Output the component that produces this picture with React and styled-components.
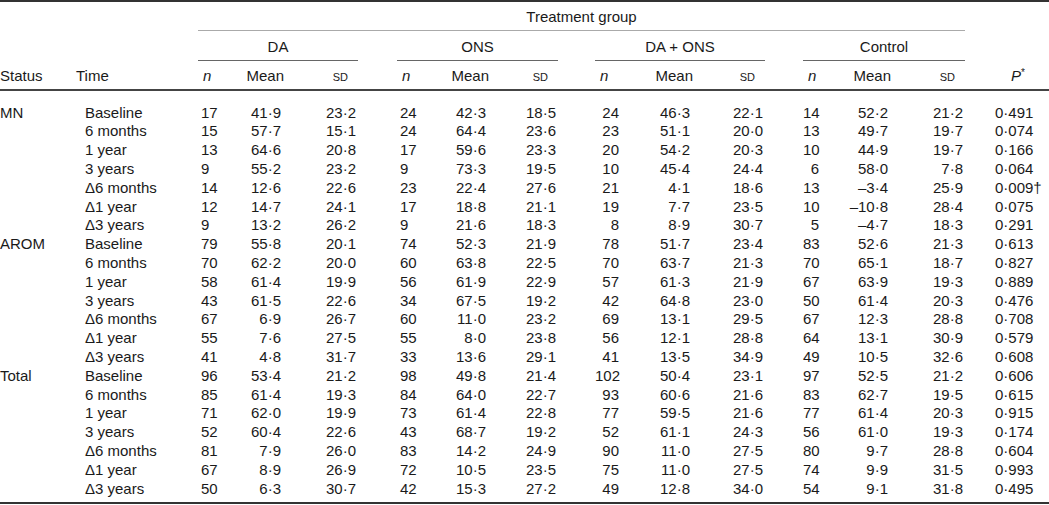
import React from 'react';
import styled, { createGlobalStyle } from 'styled-components';

const GlobalStyle = createGlobalStyle`
  html, body { margin: 0; padding: 0; background: #ffffff; }
  body { font-family: "Liberation Sans", Arial, sans-serif; color: #1a1a1a; }
`;

const COLS =
  '76px 122px 32px 55px 73px 39px 32px 61px 68px 37px 30px 69px 71px 38px 22px 67px 73px 84px';

const Table = styled.div`
  width: 1049px;
  border-top: 2px solid #333;
  border-bottom: 2px solid #333;
  font-size: 15px;
  white-space: nowrap;
`;

const Row = styled.div`
  display: grid;
  grid-template-columns: ${COLS};
  align-items: center;
  height: ${(p) => p.$h}px;
  box-sizing: border-box;
  border-bottom: ${(p) => (p.$rule ? '2px solid #444' : 'none')};
`;

const SpanLabel = styled.div`
  grid-column: ${(p) => p.$col};
  align-self: stretch;
  display: flex;
  align-items: center;
  justify-content: center;
  border-bottom: 1px solid ${(p) => p.$line};
  padding-top: ${(p) => p.$pt || 0}px;
`;

const Body = styled.div`
  padding: 12.6px 0 3.6px;
`;

const DataRow = styled.div`
  display: grid;
  grid-template-columns: ${COLS};
  height: 18.8px;
  line-height: 18.8px;
`;

const Cell = styled.div`
  text-align: ${(p) => p.$align || 'left'};
  padding-left: ${(p) => p.$pl || 0}px;
  padding-right: ${(p) => p.$pr || 0}px;
  overflow: visible;
`;

const Italic = styled.span`
  font-style: italic;
`;

const SmallCaps = styled.span`
  font-variant: small-caps;
`;

const Sup = styled.sup`
  font-size: 10px;
  vertical-align: 5px;
  line-height: 0;
`;

const groups = [
  { label: 'DA', col: '3 / 6', nAlign: 'left' },
  { label: 'ONS', col: '7 / 10', nAlign: 'left' },
  { label: 'DA + ONS', col: '11 / 14', nAlign: 'right' },
  { label: 'Control', col: '15 / 18', nAlign: 'right' },
];

const raw = [
  ['MN', [
    ['Baseline', '17 41·9 23·2', '24 42·3 18·5', '24 46·3 22·1', '14 52·2 21·2', '0·491'],
    ['6 months', '15 57·7 15·1', '24 64·4 23·6', '23 51·1 20·0', '13 49·7 19·7', '0·074'],
    ['1 year', '13 64·6 20·8', '17 59·6 23·3', '20 54·2 20·3', '10 44·9 19·7', '0·166'],
    ['3 years', '9 55·2 23·2', '9 73·3 19·5', '10 45·4 24·4', '6 58·0 7·8', '0·064'],
    ['Δ6 months', '14 12·6 22·6', '23 22·4 27·6', '21 4·1 18·6', '13 –3·4 25·9', '0·009†'],
    ['Δ1 year', '12 14·7 24·1', '17 18·8 21·1', '19 7·7 23·5', '10 –10·8 28·4', '0·075'],
    ['Δ3 years', '9 13·2 26·2', '9 21·6 18·3', '8 8·9 30·7', '5 –4·7 18·3', '0·291'],
  ]],
  ['AROM', [
    ['Baseline', '79 55·8 20·1', '74 52·3 21·9', '78 51·7 23·4', '83 52·6 21·3', '0·613'],
    ['6 months', '70 62·2 20·0', '60 63·8 22·5', '70 63·7 21·3', '70 65·1 18·7', '0·827'],
    ['1 year', '58 61·4 19·9', '56 61·9 22·9', '57 61·3 21·9', '67 63·9 19·3', '0·889'],
    ['3 years', '43 61·5 22·6', '34 67·5 19·2', '42 64·8 23·0', '50 61·4 20·3', '0·476'],
    ['Δ6 months', '67 6·9 26·7', '60 11·0 23·2', '69 13·1 29·5', '67 12·3 28·8', '0·708'],
    ['Δ1 year', '55 7·6 27·5', '55 8·0 23·8', '56 12·1 28·8', '64 13·1 30·9', '0·579'],
    ['Δ3 years', '41 4·8 31·7', '33 13·6 29·1', '41 13·5 34·9', '49 10·5 32·6', '0·608'],
  ]],
  ['Total', [
    ['Baseline', '96 53·4 21·2', '98 49·8 21·4', '102 50·4 23·1', '97 52·5 21·2', '0·606'],
    ['6 months', '85 61·4 19·3', '84 64·0 22·7', '93 60·6 21·6', '83 62·7 19·5', '0·615'],
    ['1 year', '71 62·0 19·9', '73 61·4 22·8', '77 59·5 21·6', '77 61·4 20·3', '0·915'],
    ['3 years', '52 60·4 22·6', '43 68·7 19·2', '52 61·1 24·3', '56 61·0 19·3', '0·174'],
    ['Δ6 months', '81 7·9 26·0', '83 14·2 24·9', '90 11·0 27·5', '80 9·7 28·8', '0·604'],
    ['Δ1 year', '67 8·9 26·9', '72 10·5 23·5', '75 11·0 27·5', '74 9·9 31·5', '0·993'],
    ['Δ3 years', '50 6·3 30·7', '42 15·3 27·2', '49 12·8 34·0', '54 9·1 31·8', '0·495'],
  ]],
];

function GroupCells({ values, nAlign, last }) {
  const [n, mean, sd] = values.split(' ');
  return (
    <>
      {nAlign === 'left' ? <Cell $pl={3}>{n}</Cell> : <Cell $align="right" $pr={6}>{n}</Cell>}
      <Cell $align="right" $pr={4}>{mean}</Cell>
      <Cell $align="right" $pr={2}>{sd}</Cell>
      {!last && <Cell />}
    </>
  );
}

function HeadGroup({ last }) {
  return (
    <>
      <Cell $pl={5}><Italic>n</Italic></Cell>
      <Cell $align="right" $pr={1}>Mean</Cell>
      <Cell $align="right" $pr={10}><SmallCaps>sd</SmallCaps></Cell>
      {!last && <Cell />}
    </>
  );
}

export default function App() {
  return (
    <>
      <GlobalStyle />
      <Table>
        <Row $h={29}>
          <SpanLabel $col="3 / 18" $line="#aaa">Treatment group</SpanLabel>
        </Row>
        <Row $h={30}>
          {groups.map((g) => (
            <SpanLabel key={g.label} $col={g.col} $line="#666" $pt={2}>
              {g.label}
            </SpanLabel>
          ))}
        </Row>
        <Row $h={30} $rule>
          <Cell>Status</Cell>
          <Cell>Time</Cell>
          {groups.map((g, i) => (
            <HeadGroup key={g.label} last={i === groups.length - 1} />
          ))}
          <Cell $align="right" $pr={24}>
            <Italic>P</Italic>
            <Sup>*</Sup>
          </Cell>
        </Row>
        <Body>
          {raw.map(([status, rows]) =>
            rows.map((r, idx) => (
              <DataRow key={status + r[0]}>
                <Cell>{idx === 0 ? status : ''}</Cell>
                <Cell $pl={9}>{r[0]}</Cell>
                {groups.map((g, i) => (
                  <GroupCells
                    key={g.label}
                    values={r[i + 1]}
                    nAlign={g.nAlign}
                    last={i === groups.length - 1}
                  />
                ))}
                <Cell $pl={30}>{r[5]}</Cell>
              </DataRow>
            ))
          )}
        </Body>
      </Table>
    </>
  );
}
